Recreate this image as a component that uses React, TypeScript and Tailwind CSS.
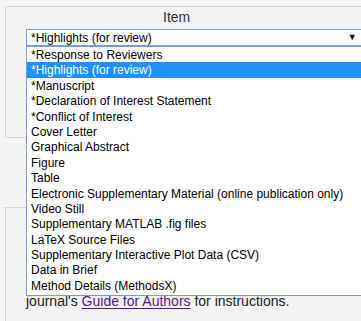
import React from "react";

const items = [
  "*Response to Reviewers",
  "*Highlights (for review)",
  "*Manuscript",
  "*Declaration of Interest Statement",
  "*Conflict of Interest",
  "Cover Letter",
  "Graphical Abstract",
  "Figure",
  "Table",
  "Electronic Supplementary Material (online publication only)",
  "Video Still",
  "Supplementary MATLAB .fig files",
  "LaTeX Source Files",
  "Supplementary Interactive Plot Data (CSV)",
  "Data in Brief",
  "Method Details (MethodsX)",
];

const App: React.FC = () => {
  return (
    <div className="relative w-[361px] h-[321px] overflow-hidden bg-[#f3f3f3] font-['Liberation_Sans',Arial,sans-serif]">
      {/* item panel */}
      <div className="ml-[5px] mt-[6px] w-[420px] h-[132px] border border-[#d3d3d3]">
        <div className="pl-[157px] pt-[1px] text-[14px] leading-[18px] text-[#333]">Item</div>
        <div className="ml-[20px] mt-[3px] w-[380px] h-[17px] border border-[#7b9bd3] bg-white flex items-center">
          <span className="pl-[4px] pt-[1px] text-[12px] leading-[15px] text-black">*Highlights (for review)</span>
          <span className="ml-[196px] text-[9px] leading-none text-black">▼</span>
        </div>
      </div>

      {/* second panel */}
      <div className="ml-[5px] mt-[69px] w-[420px] h-[120px] border-t border-l border-[#d3d3d3]">
        <div className="pl-[20px] pt-[84px] text-[14px] leading-[18px] text-[#222]">
          journal's{" "}
          <a className="text-[#551a8b] underline underline-offset-2" href="#">
            Guide for Authors
          </a>{" "}
          for instructions.
        </div>
      </div>

      {/* open dropdown list */}
      <ul className="absolute left-[26px] top-[46px] w-[400px] h-[250px] border border-[#7b9bd3] bg-white">
        {items.map((item, i) => (
          <li
            key={item}
            className={
              i === 1
                ? "h-[15.4px] pl-[4px] pt-[1px] text-[12px] leading-[14.4px] bg-[#1e90ff] text-white whitespace-nowrap"
                : "h-[15.4px] pl-[4px] pt-[1px] text-[12px] leading-[14.4px] text-black whitespace-nowrap"
            }
          >
            {item}
          </li>
        ))}
      </ul>
    </div>
  );
};

export default App;
